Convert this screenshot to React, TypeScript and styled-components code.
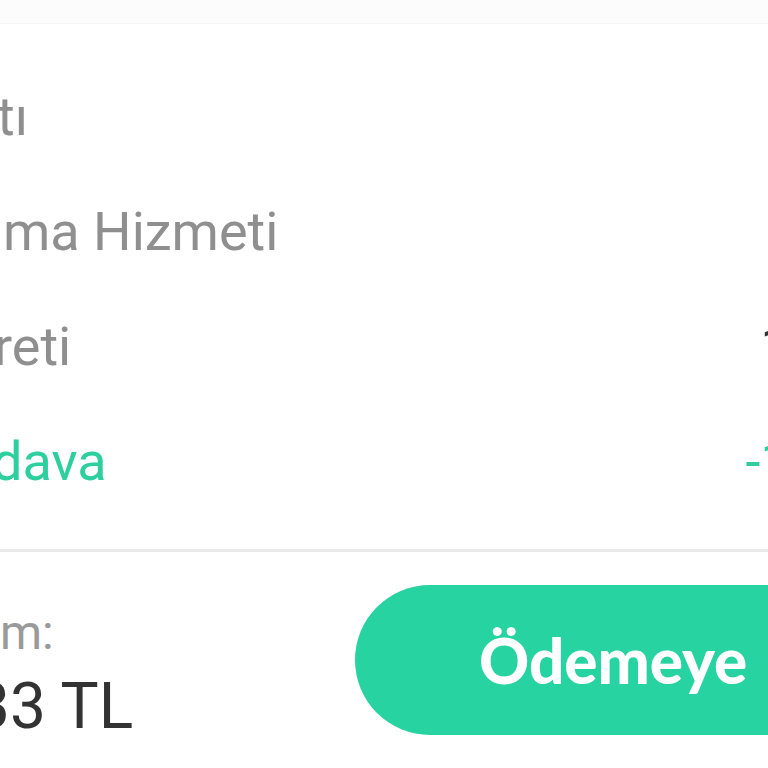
import React from "react";
import styled, { createGlobalStyle } from "styled-components";

const Global = createGlobalStyle`
  html, body { margin: 0; padding: 0; background: #ffffff; }
  body { width: 768px; height: 768px; overflow: hidden; font-family: Roboto, "Noto Sans", sans-serif; }
`;

const Screen = styled.div`
  width: 768px;
  height: 768px;
  overflow: hidden;
  background: #ffffff;
  display: flex;
  flex-direction: column;
`;

const TopBand = styled.div`
  height: 23px;
  background: #fcfcfc;
  border-bottom: 1px solid #f6f6f6;
  flex-shrink: 0;
`;

const Rows = styled.div`
  padding-top: 35px;
  margin-right: -198px;
  display: flex;
  flex-direction: column;
`;

const Row = styled.div`
  display: flex;
  justify-content: space-between;
  align-items: baseline;
  height: 115px;
  line-height: 115px;
  font-size: 54px;
  white-space: nowrap;
`;

const Label = styled.span<{ $accent?: boolean; $shift?: number }>`
  color: ${(p) => (p.$accent ? "#2ccf9d" : "#8f8f8f")};
  margin-left: ${(p) => p.$shift ?? 0}px;
`;

const Value = styled.span<{ $accent?: boolean }>`
  color: ${(p) => (p.$accent ? "#2ccf9d" : "#333333")};
`;

const Divider = styled.div`
  margin-top: 30px;
  height: 3px;
  background: #e9e9e9;
  flex-shrink: 0;
`;

const Footer = styled.div`
  display: flex;
  align-items: flex-start;
  padding-top: 33px;
`;

const TotalColumn = styled.div`
  width: 355px;
  flex-shrink: 0;
  padding-top: 20px;
  display: flex;
  flex-direction: column;
  white-space: nowrap;
`;

const TotalLabel = styled.span`
  font-size: 48px;
  line-height: 56px;
  color: #9a9a9a;
`;

const TotalValue = styled.span`
  font-size: 64px;
  line-height: 76px;
  margin-top: 8px;
  color: #333333;
  margin-left: -26px;
`;

const PayButton = styled.button`
  flex-shrink: 0;
  height: 150px;
  width: 560px;
  border: none;
  border-radius: 75px;
  background: #27d3a0;
  color: #ffffff;
  font-family: Lato, "Noto Sans", sans-serif;
  font-weight: 900;
  font-size: 62px;
  line-height: 150px;
  word-spacing: 10px;
  padding: 0 0 0 124px;
  text-align: left;
  white-space: nowrap;
  cursor: pointer;
`;

export default function App() {
  return (
    <>
      <Global />
      <Screen>
        <TopBand />
        <Rows>
          <Row>
            <Label $shift={-3}>tı</Label>
            <Value>170 TL</Value>
          </Row>
          <Row>
            <Label $shift={3}>ma Hizmeti</Label>
            <Value>5 TL</Value>
          </Row>
          <Row>
            <Label $shift={-6}>reti</Label>
            <Value>12,99 TL</Value>
          </Row>
          <Row>
            <Label $accent $shift={-8}>dava</Label>
            <Value $accent>-12,99 TL</Value>
          </Row>
        </Rows>
        <Divider />
        <Footer>
          <TotalColumn>
            <TotalLabel>m:</TotalLabel>
            <TotalValue>33 TL</TotalValue>
          </TotalColumn>
          <PayButton>Ödemeye Geç</PayButton>
        </Footer>
      </Screen>
    </>
  );
}
